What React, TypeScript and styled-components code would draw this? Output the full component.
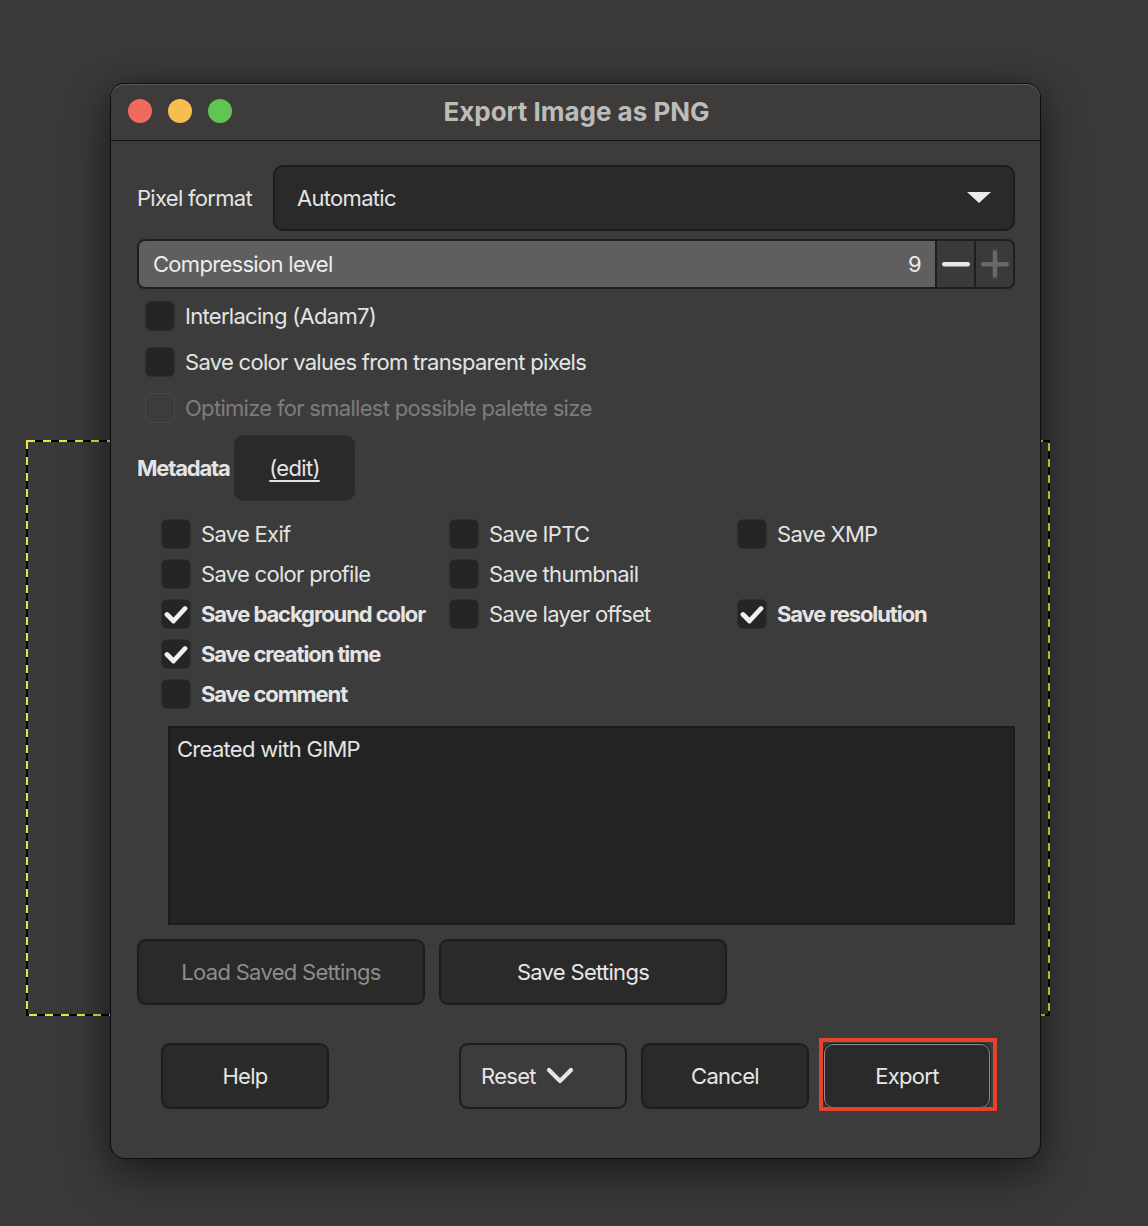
import React from "react";
import styled, { createGlobalStyle } from "styled-components";

const GlobalStyle = createGlobalStyle`
  html, body {
    margin: 0;
    padding: 0;
    background: #3a3a3a;
  }
  body {
    font-family: Inter, "Noto Sans", "Liberation Sans", sans-serif;
    -webkit-font-smoothing: antialiased;
  }
`;

const Stage = styled.div`
  position: relative;
  width: 1148px;
  height: 1226px;
  overflow: hidden;
  padding: 84px 0 0 111px;
  box-sizing: border-box;
`;

const Marquee = styled.svg`
  position: absolute;
  left: 26px;
  top: 440px;
`;

const Dialog = styled.div`
  position: relative;
  width: 929px;
  background: #3c3c3c;
  border-radius: 14px;
  box-shadow: 0 0 0 1px #0d0d0d, 0 18px 50px rgba(0, 0, 0, 0.45),
    0 0 30px rgba(0, 0, 0, 0.25);
  color: #e4e4e4;
  font-size: 22px;
  letter-spacing: -0.7px;
`;

const TitleBar = styled.div`
  position: relative;
  height: 56px;
  border-bottom: 1px solid #121212;
  background: #3d3c3a;
  border-radius: 14px 14px 0 0;
  box-shadow: inset 0 1px 0 #5a5a58;
  display: flex;
  align-items: center;
  justify-content: center;
`;

const Lights = styled.div`
  position: absolute;
  left: 17px;
  top: 15px;
  display: flex;
  gap: 16px;
`;

const Light = styled.span<{ $color: string }>`
  width: 24px;
  height: 24px;
  border-radius: 50%;
  background: ${(p) => p.$color};
`;

const Title = styled.div`
  font-weight: 700;
  font-size: 26px;
  letter-spacing: 0;
  color: #bdbcb9;
  margin: -2px 0 0 2px;
`;

const Content = styled.div`
  padding: 24px 25px 49px 26px;
  display: flex;
  flex-direction: column;
`;

const FormatRow = styled.div`
  display: flex;
  align-items: center;
  height: 66px;
`;

const FormatLabel = styled.div`
  width: 136px;
  flex: none;
`;

const Select = styled.div`
  flex: 1;
  height: 66px;
  box-sizing: border-box;
  background: #2a2a2a;
  border: 2px solid #1d1d1d;
  border-radius: 10px;
  display: flex;
  align-items: center;
  justify-content: space-between;
  padding: 0 22px 0 22px;
`;

const Spin = styled.div`
  margin-top: 8px;
  height: 50px;
  box-sizing: border-box;
  border: 2px solid #1e1e1e;
  border-radius: 8px;
  display: flex;
  overflow: hidden;
`;

const SpinFill = styled.div`
  flex: 1;
  background: #5f5f5f;
  display: flex;
  align-items: center;
  justify-content: space-between;
  padding: 0 14px 0 14px;
  color: #ececec;
`;

const SpinButton = styled.div`
  width: 37px;
  flex: none;
  border-left: 2px solid #1e1e1e;
  background: #3a3a3a;
  display: flex;
  align-items: center;
  justify-content: center;
`;

const Options = styled.div`
  margin-top: 4px;
  padding-left: 8px;
  display: flex;
  flex-direction: column;
`;

const CheckRow = styled.div<{ $h: number; $disabled?: boolean; $bold?: boolean }>`
  height: ${(p) => p.$h}px;
  display: flex;
  align-items: center;
  gap: 10px;
  color: ${(p) => (p.$disabled ? "#7c7c7c" : "#e4e4e4")};
  font-weight: ${(p) => (p.$bold ? 700 : 400)};
  letter-spacing: ${(p) => (p.$bold ? "-1.1px" : "-0.7px")};
  white-space: nowrap;
`;

const Box = styled.span<{ $disabled?: boolean }>`
  width: 30px;
  height: 30px;
  flex: none;
  box-sizing: border-box;
  border-radius: 6px;
  background: ${(p) => (p.$disabled ? "transparent" : "#252525")};
  border: 1px solid ${(p) => (p.$disabled ? "#4a4a4a" : "#303030")};
  display: flex;
  align-items: center;
  justify-content: center;
`;

const MetaRow = styled.div`
  margin-top: 4px;
  height: 66px;
  display: flex;
  align-items: center;
`;

const MetaLabel = styled.div`
  font-weight: 700;
  letter-spacing: -1.2px;
  width: 97px;
`;

const EditButton = styled.div`
  width: 121px;
  height: 66px;
  background: #2a2a2a;
  border-radius: 10px;
  display: flex;
  align-items: center;
  justify-content: center;
  text-decoration: underline;
  text-underline-offset: 4px;
`;

const MetaGrid = styled.div`
  margin-top: 13px;
  padding-left: 24px;
  display: grid;
  grid-template-columns: 288px 288px 1fr;
  grid-auto-rows: 40px;
`;

const Comment = styled.div`
  margin: 12px 0 0 31px;
  height: 199px;
  box-sizing: border-box;
  background: #232323;
  border: 2px solid #1b1b1b;
  padding: 8px 7px;
`;

const SettingsRow = styled.div`
  margin-top: 14px;
  display: flex;
  gap: 14px;
`;

const Button = styled.div<{ $w: number; $muted?: boolean; $flat?: boolean }>`
  position: relative;
  width: ${(p) => p.$w}px;
  height: 66px;
  box-sizing: border-box;
  background: ${(p) => (p.$flat ? "#3c3c3c" : "#2a2a2a")};
  border: 2px solid #1d1d1d;
  border-radius: 9px;
  display: flex;
  align-items: center;
  justify-content: ${(p) => (p.$flat ? "flex-start" : "center")};
  padding-left: ${(p) => (p.$flat ? "20px" : "0")};
  gap: 10px;
  color: ${(p) => (p.$muted ? "#8c8c8c" : "#e6e6e6")};
`;

const FocusRing = styled.span`
  position: absolute;
  inset: -1px;
  border: 1px solid #8e8e8e;
  border-radius: 9px;
`;

const Highlight = styled.span`
  position: absolute;
  left: -6px;
  top: -7px;
  right: -8px;
  bottom: -4px;
  border: 4px solid #e5412b;
`;

const BottomRow = styled.div`
  margin-top: 38px;
  padding: 0 24px;
  display: flex;
  gap: 14px;
`;

const Spacer = styled.div`
  flex: 1;
`;

const Check = () => (
  <svg width="24" height="24" viewBox="0 0 24 24">
    <path
      d="M3 12.5 L9.5 19 L21 6.5"
      fill="none"
      stroke="#f0f0f0"
      strokeWidth="4.8"
      strokeLinecap="round"
      strokeLinejoin="round"
    />
  </svg>
);

interface OptionProps {
  label: string;
  checked?: boolean;
  bold?: boolean;
  disabled?: boolean;
  h: number;
}

const Option = ({ label, checked, bold, disabled, h }: OptionProps) => (
  <CheckRow $h={h} $bold={bold} $disabled={disabled}>
    <Box $disabled={disabled}>{checked && <Check />}</Box>
    {label}
  </CheckRow>
);

const metadata: (OptionProps | null)[] = [
  { label: "Save Exif", h: 40 },
  { label: "Save IPTC", h: 40 },
  { label: "Save XMP", h: 40 },
  { label: "Save color profile", h: 40 },
  { label: "Save thumbnail", h: 40 },
  null,
  { label: "Save background color", h: 40, checked: true, bold: true },
  { label: "Save layer offset", h: 40 },
  { label: "Save resolution", h: 40, checked: true, bold: true },
  { label: "Save creation time", h: 40, checked: true, bold: true },
  null,
  null,
  { label: "Save comment", h: 40, bold: true },
];

export default function App() {
  return (
    <>
      <GlobalStyle />
      <Stage>
        <Marquee width="1024" height="576" viewBox="0 0 1024 576">
          <rect x="1" y="1" width="1022" height="574" fill="none" stroke="#000" strokeWidth="2" />
          <rect
            x="1"
            y="1"
            width="1022"
            height="574"
            fill="none"
            stroke="#ece53a"
            strokeWidth="2"
            strokeDasharray="8 8"
          />
        </Marquee>
        <Dialog>
          <TitleBar>
            <Lights>
              <Light $color="#ee6a5f" />
              <Light $color="#f5be4f" />
              <Light $color="#61c554" />
            </Lights>
            <Title>Export Image as PNG</Title>
          </TitleBar>
          <Content>
            <FormatRow>
              <FormatLabel>Pixel format</FormatLabel>
              <Select>
                Automatic
                <svg width="24" height="12" viewBox="0 0 24 12">
                  <polygon points="0,0 24,0 12,11" fill="#ececec" />
                </svg>
              </Select>
            </FormatRow>
            <Spin>
              <SpinFill>
                <span>Compression level</span>
                <span>9</span>
              </SpinFill>
              <SpinButton>
                <svg width="28" height="6" viewBox="0 0 28 6">
                  <rect x="0" y="1" width="28" height="4.5" rx="2.2" fill="#e6e6e6" />
                </svg>
              </SpinButton>
              <SpinButton>
                <svg width="28" height="28" viewBox="0 0 28 28">
                  <rect x="0" y="12" width="28" height="4.5" rx="2.2" fill="#686868" />
                  <rect x="11.75" y="0" width="4.5" height="28" rx="2.2" fill="#686868" />
                </svg>
              </SpinButton>
            </Spin>
            <Options>
              <Option h={46} label="Interlacing (Adam7)" />
              <Option h={46} label="Save color values from transparent pixels" />
              <Option h={46} label="Optimize for smallest possible palette size" disabled />
            </Options>
            <MetaRow>
              <MetaLabel>Metadata</MetaLabel>
              <EditButton>(edit)</EditButton>
            </MetaRow>
            <MetaGrid>
              {metadata.map((m, i) =>
                m ? <Option key={i} {...m} /> : <span key={i} />
              )}
            </MetaGrid>
            <Comment>Created with GIMP</Comment>
            <SettingsRow>
              <Button $w={288} $muted>
                Load Saved Settings
              </Button>
              <Button $w={288}>Save Settings</Button>
            </SettingsRow>
            <BottomRow>
              <Button $w={168}>Help</Button>
              <Spacer />
              <Button $w={168} $flat>
                Reset
                <svg width="28" height="18" viewBox="0 0 28 18">
                  <polyline
                    points="3,3 14,14 25,3"
                    fill="none"
                    stroke="#e6e6e6"
                    strokeWidth="4.2"
                    strokeLinecap="round"
                    strokeLinejoin="round"
                  />
                </svg>
              </Button>
              <Button $w={168}>Cancel</Button>
              <Button $w={168}>
                <FocusRing />
                Export
                <Highlight />
              </Button>
            </BottomRow>
          </Content>
        </Dialog>
      </Stage>
    </>
  );
}
